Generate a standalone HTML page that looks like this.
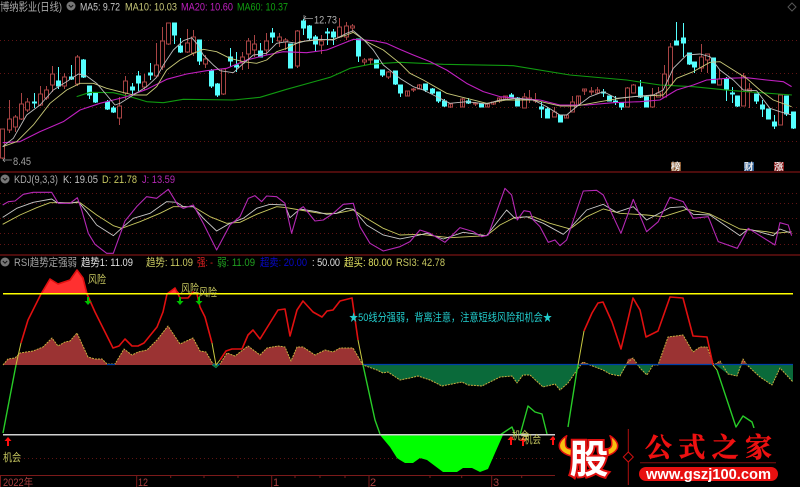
<!DOCTYPE html>
<html><head><meta charset="utf-8"><style>
html,body{margin:0;padding:0;background:#000;width:800px;height:487px;overflow:hidden}
svg{display:block;filter:blur(.35px)}
text{font-family:"Liberation Sans","Noto Sans CJK SC",sans-serif;font-size:11px}
</style></head><body>
<svg width="800" height="487" viewBox="0 0 800 487" xmlns="http://www.w3.org/2000/svg">
<rect width="800" height="487" fill="#000"/>
<!-- grids -->
<g stroke="#601414" stroke-width="1" stroke-dasharray="1 3" fill="none">
<path d="M0 40.500H800M0 73.500H800M0 107.500H800M0 141.500H800"/>
<path d="M0 193.500H800M0 203.500H800M0 218.500H800M0 233.500H800M0 244.500H800"/>
<path d="M20 458.500H555"/>
</g>
<!-- panel lines -->
<path d="M0 172H800M0 255H800" stroke="#7a1414" stroke-width="1.200" fill="none"/>
<path d="M0 475.500H555M.5 475V487M136.700 475V487M271.700 475V487M369 475V487M491.700 475V487M170.700 475V478M204 475V478M238 475V478M295 475V478M320 475V478M345 475V478M430 475V478M461.700 475V478M521.700 475V478" stroke="#7a1a1a" stroke-width="1" fill="none"/>
<!-- red candles -->
<path fill="#000" stroke="#a84444" stroke-width="1" d="M2.500 158V159M.5 129h4v29h-4zM9.500 100V119M9.500 130V133M7.500 119h4v11h-4zM15.500 115V117M15.500 127V132M13.500 117h4v10h-4zM21.500 93V104M21.500 119V120M19.500 104h4v15h-4zM27.500 98V102M27.500 110V112M25.500 102h4v8h-4zM40.500 86V94M40.500 105V106M38.500 94h4v11h-4zM46.500 86V90M46.500 98V100M44.500 90h4v8h-4zM52.500 66V74M52.500 85V92M50.500 74h4v11h-4zM64.500 73V77M64.500 86V89M62.500 77h4v9h-4zM77.500 55V57M77.500 84V86M75.500 57h4v27h-4zM119.500 97V106M119.500 118V125M117.500 106h4v12h-4zM125.500 76V81M125.500 93V99M123.500 81h4v12h-4zM144.500 74V82M144.500 87V90M142.500 82h4v5h-4zM156.500 43V65M156.500 76V77M154.500 65h4v11h-4zM162.500 27V41M162.500 67V70M160.500 41h4v26h-4zM168.500 44V45M166.500 23h4v21h-4zM187.500 29V43M187.500 52V53M185.500 43h4v9h-4zM193.500 30V37M193.500 53V56M191.500 37h4v16h-4zM205.500 55V59M205.500 64V68M203.500 59h4v5h-4zM223.500 94V95M221.500 69h4v25h-4zM242.500 52V57M242.500 63V70M240.500 57h4v6h-4zM248.500 38V41M248.500 54V69M246.500 41h4v13h-4zM254.500 35V44M254.500 50V57M252.500 44h4v6h-4zM266.500 33V41M266.500 50V55M264.500 41h4v9h-4zM279.500 33V37M279.500 41V47M277.500 37h4v4h-4zM285.500 38V40M285.500 42V50M283.500 40h4v2h-4zM297.500 30V31M297.500 66V68M295.500 31h4v35h-4zM321.500 35V41M321.500 45V54M319.500 41h4v4h-4zM339.500 18V27M339.500 37V38M337.500 27h4v10h-4zM346.500 22V26M346.500 37V40M344.500 26h4v11h-4zM352.500 24V26M352.500 28V32M350.500 26h4v2h-4zM364.500 58V60M364.500 62V65M362.500 60h4v2h-4zM370.500 58V59M370.500 60V65M368.500 59h4v1h-4zM388.500 71V72M388.500 77V79M386.500 72h4v5h-4zM407.500 91V96M405.500 91h4v5h-4zM413.500 88V92M411.500 89h4v1h-4zM419.500 84V89M417.500 85h4v4h-4zM450.500 103V108M448.500 104h4v3h-4zM462.500 98V107M460.500 99h4v8h-4zM475.500 102V106M473.500 103h4v1h-4zM487.500 103V107M485.500 104h4v3h-4zM493.500 102V105M491.500 102h4v2h-4zM499.500 98V103M497.500 98h4v3h-4zM505.500 96V100M503.500 96h4v3h-4zM524.500 93V97M522.500 97h4v11h-4zM529.500 90V103M527.500 98h4v2h-4zM535.500 93V103M533.500 100h4v1h-4zM554.500 107V112M552.500 112h4v5h-4zM566.500 115V118M564.500 115h4v3h-4zM572.500 96V102M570.500 102h4v10h-4zM578.500 96V105M576.500 96h4v9h-4zM584.500 89V95M582.500 89h4v2h-4zM591.500 87V95M589.500 91h4v1h-4zM597.500 87V94M595.500 90h4v3h-4zM627.500 87V88M625.500 88h4v19h-4zM633.500 84V85M631.500 85h4v8h-4zM652.500 88V95M652.500 107V108M650.500 95h4v12h-4zM658.500 87V93M656.500 93h4v4h-4zM664.500 65V74M662.500 74h4v23h-4zM670.500 43V47M668.500 47h4v38h-4zM701.500 44V57M701.500 68V72M699.500 57h4v11h-4zM707.500 60V73M705.500 54h4v6h-4zM719.500 70V79M717.500 79h4v6h-4zM743.500 73V76M741.500 76h4v30h-4zM749.500 83V89M749.500 91V108M747.500 89h4v2h-4zM780.500 94V95M778.500 95h4v30h-4z"/>
<!-- cyan candles -->
<path fill="#55ffff" stroke="#55ffff" stroke-width="1" d="M34.500 93V108M32.500 102h4v1h-4zM58.500 67V89M56.500 81h4v5h-4zM71.500 65V80M69.500 77h4v2h-4zM83.500 59V78M81.500 60h4v17h-4zM89.500 86V99M87.500 86h4v9h-4zM95.500 92V103M93.500 93h4v9h-4zM107.500 100V110M105.500 102h4v7h-4zM113.500 106V113M111.500 108h4v4h-4zM132.500 83V95M130.500 87h4v3h-4zM138.500 71V91M136.500 76h4v7h-4zM150.500 63V80M148.500 73h4v2h-4zM174.500 23V44M172.500 23h4v12h-4zM180.500 38V53M178.500 46h4v6h-4zM199.500 40V65M197.500 40h4v21h-4zM211.500 69V88M209.500 71h4v15h-4zM217.500 83V97M215.500 84h4v11h-4zM230.500 48V67M228.500 57h4v4h-4zM236.500 52V72M234.500 65h4v2h-4zM260.500 43V57M258.500 51h4v6h-4zM272.500 28V43M270.500 33h4v4h-4zM290.500 44V68M288.500 44h4v24h-4zM303.500 19V35M301.500 21h4v7h-4zM309.500 25V41M307.500 26h4v12h-4zM315.500 35V52M313.500 37h4v7h-4zM327.500 28V45M325.500 32h4v1h-4zM333.500 29V45M331.500 32h4v5h-4zM358.500 39V62M356.500 39h4v17h-4zM376.500 60V68M374.500 60h4v8h-4zM382.500 70V77M380.500 70h4v5h-4zM395.500 71V85M393.500 71h4v13h-4zM400.500 85V97M398.500 85h4v8h-4zM425.500 84V92M423.500 84h4v6h-4zM432.500 88V94M430.500 89h4v4h-4zM438.500 92V103M436.500 92h4v9h-4zM444.500 99V107M442.500 101h4v5h-4zM468.500 98V104M466.500 101h4v2h-4zM481.500 103V107M479.500 104h4v3h-4zM511.500 93V97M509.500 95h4v2h-4zM517.500 97V106M515.500 98h4v8h-4zM541.500 102V118M539.500 107h4v2h-4zM547.500 107V118M545.500 109h4v9h-4zM560.500 115V122M558.500 115h4v7h-4zM603.500 89V97M601.500 92h4v1h-4zM609.500 96V101M607.500 96h4v5h-4zM615.500 96V105M613.500 101h4v1h-4zM621.500 103V110M619.500 103h4v4h-4zM640.500 80V98M638.500 87h4v10h-4zM646.500 95V107M644.500 97h4v10h-4zM676.500 22V45M674.500 41h4v4h-4zM683.500 23V57M681.500 38h4v5h-4zM689.500 53V65M687.500 53h4v11h-4zM694.500 62V73M692.500 62h4v5h-4zM713.500 58V83M711.500 58h4v25h-4zM726.500 77V101M724.500 79h4v10h-4zM732.500 87V103M730.500 93h4v1h-4zM737.500 96V107M735.500 96h4v10h-4zM756.500 94V104M754.500 94h4v7h-4zM762.500 100V117M760.500 105h4v4h-4zM768.500 109V119M766.500 109h4v10h-4zM774.500 115V129M772.500 122h4v4h-4zM786.500 96V116M784.500 96h4v18h-4zM793.500 112V129M791.500 112h4v16h-4z"/>
<!-- MA lines -->
<g fill="none" stroke-linejoin="round">
<g transform="scale(.3333)" stroke-width="2.700">
<polyline stroke="#109a10" stroke-width="3.300" points="230,290 270,277 340,278 390,290 440,305 490,308 550,298 700,300 780,292 860,268 950,243 990,232 1050,205 1110,193 1150,190 1200,187 1330,193 1540,197 1710,225 1880,240 1980,255 2080,260 2200,272 2376,285"/>
<polyline stroke="#c020c0" stroke-width="3.300" points="8,428 60,425 120,395 190,365 240,330 300,310 340,300 380,290 440,268 500,238 560,222 620,212 680,205 740,180 800,165 850,155 920,158 980,150 1030,130 1060,118 1120,122 1160,130 1200,148 1240,165 1290,185 1340,210 1400,250 1450,275 1500,290 1550,295 1620,300 1680,315 1760,315 1840,308 1920,305 1980,300 2030,270 2080,255 2120,240 2180,235 2240,233 2300,240 2350,245 2375,260"/>
<polyline stroke="#c8c878" points="8,440 50,425 100,375 150,310 200,270 240,250 280,250 320,265 360,275 400,285 440,285 470,260 500,210 540,180 580,160 610,148 650,155 690,175 730,185 770,190 800,180 830,155 860,145 900,125 950,120 1000,118 1040,105 1060,97 1100,125 1150,150 1200,190 1230,220 1270,240 1340,280 1400,295 1460,310 1520,300 1600,300 1680,318 1730,318 1800,305 1860,295 1900,290 1990,285 2030,235 2080,215 2130,187 2160,185 2200,210 2240,235 2280,270 2320,300 2375,320"/>
<polyline stroke="#bcbcbc" points="8,440 40,415 80,345 120,315 160,270 200,245 235,222 260,228 290,250 320,285 345,315 360,310 400,285 440,260 470,232 490,195 520,150 550,122 575,113 590,130 610,165 640,195 660,212 700,218 725,195 760,165 800,160 830,130 860,125 890,130 920,122 960,118 1000,120 1040,100 1060,92 1090,118 1120,150 1150,195 1200,235 1240,260 1270,270 1310,290 1350,310 1400,305 1460,312 1500,300 1550,295 1600,300 1640,320 1680,345 1700,345 1730,320 1770,290 1810,275 1850,295 1900,290 1960,285 1990,270 2020,205 2060,165 2100,162 2130,170 2160,210 2200,240 2230,270 2270,272 2310,325 2340,335 2375,345"/>
</g>
<g transform="translate(0,165) scale(.3333)" stroke-width="2.700">
<polyline stroke="#c8c860" points="8,178 60,150 110,128 150,113 210,113 240,113 290,150 340,182 365,190 420,170 480,145 520,125 580,125 630,155 680,175 720,172 770,148 830,125 860,128 900,135 960,145 1010,145 1060,135 1100,160 1150,190 1200,210 1260,208 1350,218 1460,212 1500,180 1545,157 1600,155 1650,175 1710,192 1760,155 1810,132 1860,145 1940,150 1990,155 2060,133 2130,147 2220,192 2300,200 2325,205 2375,200"/>
<polyline stroke="#c8c8c8" points="8,157 50,130 100,112 155,102 170,112 210,115 235,110 260,140 290,180 340,212 370,185 400,160 450,145 500,110 530,112 550,125 580,125 610,160 650,198 690,175 730,160 770,130 810,118 855,120 870,158 900,132 950,140 980,148 1010,145 1040,130 1060,133 1100,180 1150,210 1200,222 1250,212 1280,205 1330,222 1390,202 1460,212 1520,135 1545,160 1580,155 1630,175 1690,208 1710,190 1760,135 1810,118 1850,142 1900,125 1940,165 2010,128 2050,125 2080,148 2130,150 2220,212 2245,192 2320,212 2340,192 2375,205"/>
<polyline stroke="#b428b4" stroke-width="3.300" points="8,120 25,110 45,108 70,88 100,82 155,82 175,115 210,115 232,98 245,135 265,205 285,238 320,265 340,265 375,168 410,125 440,95 470,100 505,73 535,122 550,130 580,120 610,175 650,255 690,180 720,155 745,100 765,92 785,110 800,93 830,95 855,115 875,205 895,135 910,125 945,168 970,165 1000,145 1030,118 1060,115 1080,185 1110,235 1150,258 1200,245 1230,230 1260,195 1290,205 1335,232 1380,188 1420,200 1445,215 1465,210 1515,70 1535,90 1552,165 1572,137 1590,140 1600,165 1620,185 1645,232 1665,225 1680,242 1700,225 1750,78 1790,76 1810,90 1863,205 1900,103 1940,200 1975,170 2010,97 2050,110 2080,160 2125,155 2155,230 2212,250 2245,190 2285,215 2325,240 2340,173 2365,180 2375,212"/>
</g>
<!-- RSI -->
<polygon fill="#9b3333" stroke="none" points="3,365 8,359 15,358 20,353 33,351 43,347 52,338 58,346 65,342 70,341 77,333 88,357 95,359 102,359 107,364 115,364 124,349 132,355 138,352 147,350 157,340 168,326 180,344 193,338 200,351 206,352 213,364 220,364 227,353 235,356 248,346 260,355 267,348 278,346 285,347 291,361 297,347 303,347 315,355 325,350 333,352 340,348 353,348 363,365"/>
<polygon fill="#9b3333" stroke="none" points="578,365 583,362 590,365 626,365 628,359 633,358 637,365 658,365 668,337 683,335 693,352 700,347 707,347 714,365 715,365 719,361 722,365 740,365 743,359 747,365"/>
<path fill="#0a6a3a" stroke="none" d="M363 365L377 370 383 373 388 372 400 380 410 378 418 376 430 380 442 386 462 382 468 385 482 386 490 382 500 377 512 376 517 383 523 375 530 375 543 387 555 384 560 390 568 383 577 370 580 365ZM590 365L603 370 610 374 620 376 627 365ZM637 365L646 375 653 365ZM716 365L728 374 737 376 742 365ZM747 365L760 377 772 385 780 368 793 382V365Z"/>
<polyline stroke="#c8b040" stroke-width="1" stroke-dasharray="2 1" points="3,365 8,359 15,358 20,353 33,351 43,347 52,338 58,346 65,342 70,341 77,333 88,357 95,359 102,359 107,364 115,364 124,349 132,355 138,352 147,350 157,340 168,326 180,344 193,338 200,351 206,352 213,364 220,364 227,353 235,356 248,346 260,355 267,348 278,346 285,347 291,361 297,347 303,347 315,355 325,350 333,352 340,348 353,348 363,365 377,370 383,373 388,372 400,380 410,378 418,376 430,380 442,386 462,382 468,385 482,386 490,382 500,377 512,376 517,383 523,375 530,375 543,387 555,384 560,390 568,383 577,370 583,362 590,365 603,370 610,374 620,376 627,363 633,358 640,368 647,375 653,365 658,365 668,337 683,335 693,352 700,347 707,347 714,365 720,361 728,374 737,376 743,359 747,365 760,377 772,385 780,368 793,382"/>
<path stroke="#0040a8" stroke-width="1.200" d="M363 364.500H793M107 364.500H115M213 364.500H220"/>
<path stroke="#00a060" fill="#0a6a3a" stroke-width=".5" d="M212 365L216 368 219 365Z"/>
<polygon fill="#ff3030" stroke="none" points="41,294 50,279 58,284 70,280 77,270 83,278 87,294"/>
<polygon fill="#ff3030" stroke="none" points="167,294 175,288 180,294"/>
<polyline stroke="#e01010" stroke-width="1.600" points="21,343 28,320 41,294 50,279 58,284 70,280 77,270 83,278 87,294 95,312 113,348 119,346 125,339 132,346 138,346 144,343 157,327 163,312 167,294 175,288 180,298 188,298 193,292 197,294 200,307 205,317 212,343"/>
<polyline stroke="#e01010" stroke-width="1.600" points="220,360 226,351 232,349 242,349 248,335 253,330 260,339 278,310 285,309 290,336 297,310 303,301 313,312 322,317 327,311 333,310 340,301 352,298 358,340"/>
<polyline stroke="#e01010" stroke-width="1.600" points="584,331 592,313 598,303 603,302 612,322 621,349 633,298 640,310 646,337 658,331 670,297 683,298 693,336 707,337 713,365"/>
<polyline stroke="#c8c840" stroke-width="1" points="21,343 16,365"/>
<polyline stroke="#c8c840" stroke-width="1" points="212,343 216,365 220,360"/>
<polyline stroke="#c8c840" stroke-width="1" points="358,340 363,365"/>
<polyline stroke="#c8c840" stroke-width="1" points="578,365 584,331"/>
<polyline stroke="#c8c840" stroke-width="1" points="713,365 717,370"/>
<g stroke="#28cc28" stroke-width="1.400">
<polyline points="3,433 16,365"/>
<polyline points="363,365 375,420 380,434"/>
<polyline points="568,427 577,370 578,365"/>
<polyline points="717,370 736,427 743,416 752,422 754,428"/>
<polyline points="500,435 512,427 515,435"/>
<polyline points="520,435 528,406 535,412 542,414 547,434"/>
</g>
<polygon fill="#00ff00" stroke="none" points="380,435 390,447 397,458 400,460 405,463 413,463 420,458 427,460 443,472 457,472 463,468 472,468 480,472 488,469 495,453 503,435"/>
<path stroke="#ffff00" stroke-width="1.500" d="M3 293.700H793"/>
<path stroke="#d0d0d0" stroke-width="1.500" d="M3 434.700H555"/>
</g>
<!-- arrows -->
<g fill="#00c000">
<path d="M87 297h2v4h2.500L88 305 84.500 301H87z"/>
<path d="M179 297h2v4h2.500L180 305 176.500 301H179z"/>
<path d="M198 297h2v4h2.500L199 305 195.500 301H198z"/>
</g>
<g fill="#ff1010">
<path d="M7 446h2v-5h2.500L8 437 4.500 441H7z"/>
<path d="M510 445h2v-5h2.500L511 436 507.500 440H510z"/>
<path d="M522 446h2v-5h2.500L523 437 519.500 441H522z"/>
<path d="M552 445h2v-5h2.500L553 436 549.500 440H552z"/>
</g>
<!-- text -->
<g fill="#c8c860">
<text x="88" y="283" textLength="18" lengthAdjust="spacingAndGlyphs">风险</text>
<text x="181" y="292" textLength="18" lengthAdjust="spacingAndGlyphs">风险</text>
<text x="199" y="296" textLength="18" lengthAdjust="spacingAndGlyphs">风险</text>
<text x="3" y="461" textLength="18" lengthAdjust="spacingAndGlyphs">机会</text>
<text x="512" y="439" textLength="17" lengthAdjust="spacingAndGlyphs">机会</text>
<text x="524" y="443" textLength="17" lengthAdjust="spacingAndGlyphs">机会</text>
</g>
<text x="0" y="10.500" fill="#a8a8a8" textLength="62" lengthAdjust="spacingAndGlyphs">博纳影业(日线)</text>
<text x="80" y="10.500" fill="#c8c8c8" textLength="40" lengthAdjust="spacingAndGlyphs">MA5: 9.72</text>
<text x="125" y="10.500" fill="#c8c878" textLength="52" lengthAdjust="spacingAndGlyphs">MA10: 10.03</text>
<text x="181" y="10.500" fill="#c020c0" textLength="52" lengthAdjust="spacingAndGlyphs">MA20: 10.60</text>
<text x="237" y="10.500" fill="#10a010" textLength="51" lengthAdjust="spacingAndGlyphs">MA60: 10.37</text>
<text x="314" y="23.500" fill="#b0b0b0" textLength="23" lengthAdjust="spacingAndGlyphs">12.73</text>
<text x="13" y="165" fill="#a0a0a0" textLength="18" lengthAdjust="spacingAndGlyphs">8.45</text>
<path d="M313 18.500H304M306 16l-2 2.500 2 2.500M304 15V19" stroke="#a0a0a0" fill="none" stroke-width=".8"/>
<path d="M12 160H3M5 158l-2 2 2 2" stroke="#a0a0a0" fill="none" stroke-width=".8"/>
<text x="14" y="183" fill="#a8a8a8" textLength="44" lengthAdjust="spacingAndGlyphs">KDJ(9,3,3)</text>
<text x="63" y="183" fill="#c0c0c0" textLength="35" lengthAdjust="spacingAndGlyphs">K: 19.05</text>
<text x="102" y="183" fill="#c8c860" textLength="35" lengthAdjust="spacingAndGlyphs">D: 21.78</text>
<text x="142" y="183" fill="#b428b4" textLength="33" lengthAdjust="spacingAndGlyphs">J: 13.59</text>
<text x="14" y="266" fill="#a0a0a0" textLength="63" lengthAdjust="spacingAndGlyphs">RSI趋势定强弱</text>
<text x="81" y="266" fill="#e0e0e0" textLength="52" lengthAdjust="spacingAndGlyphs">趋势1: 11.09</text>
<text x="146" y="266" fill="#c8c860" textLength="47" lengthAdjust="spacingAndGlyphs">趋势: 11.09</text>
<text x="197" y="266" fill="#dd2020" textLength="16" lengthAdjust="spacingAndGlyphs">强: -</text>
<text x="217" y="266" fill="#20a020" textLength="38" lengthAdjust="spacingAndGlyphs">弱: 11.09</text>
<text x="260" y="266" fill="#0808c8" textLength="47" lengthAdjust="spacingAndGlyphs">超卖: 20.00</text>
<text x="312" y="266" fill="#e0e0e0" textLength="28" lengthAdjust="spacingAndGlyphs">: 50.00</text>
<text x="344" y="266" fill="#e0e060" textLength="48" lengthAdjust="spacingAndGlyphs">超买: 80.00</text>
<text x="396" y="266" fill="#c8c860" textLength="49" lengthAdjust="spacingAndGlyphs">RSI3: 42.78</text>
<text x="349" y="321" fill="#22cccc" textLength="203" lengthAdjust="spacingAndGlyphs">★50线分强弱，背离注意，注意短线风险和机会★</text>
<g fill="#a84040">
<text x="3" y="486" textLength="30" lengthAdjust="spacingAndGlyphs">2022年</text>
<text x="138" y="486" textLength="10" lengthAdjust="spacingAndGlyphs">12</text>
<text x="273" y="486">1</text>
<text x="370" y="486">2</text>
<text x="493" y="486">3</text>
</g>
<!-- circle icons -->
<g>
<circle cx="71" cy="6" r="4.500" fill="#777"/><path d="M68.800 5l2.200 2.200L73.200 5" stroke="#111" fill="none"/>
<circle cx="5" cy="179" r="4.500" fill="#777"/><path d="M2.800 178l2.200 2.200L7.200 178" stroke="#111" fill="none"/>
<circle cx="5" cy="262" r="4.500" fill="#777"/><path d="M2.800 261l2.200 2.200L7.200 261" stroke="#111" fill="none"/>
</g>
<path d="M792 3l4 4-4 4-4-4z" stroke="#555" fill="none"/>
<!-- tags -->
<rect x="671" y="162" width="10" height="9" fill="#8a5a30"/>
<rect x="744" y="162" width="10" height="9" fill="#2a5a90"/>
<rect x="774" y="162" width="10" height="9" fill="#8a1a1a"/>
<g fill="#e8e8e8" font-weight="bold">
<text x="671" y="170" style="font-size:9.500px">榜</text>
<text x="744" y="170" style="font-size:9.500px">财</text>
<text x="774" y="170" style="font-size:9.500px">涨</text>
</g>
<!-- logo -->
<rect x="555" y="428" width="245" height="59" fill="#000"/>
<g stroke="#e01010" stroke-width="1.500" fill="#f8c010" stroke-linejoin="round">
<path d="M566.700 435.700Q557 442 560 449 563 454 571 456L572 449Q566 449 565.700 445 565 440 566.700 435.700Z"/>
<path d="M610 435.700Q620 442 617 449 614 454 606 456L605 449Q611 449 611.700 445 612 440 610 435.700Z"/>
</g>
<text x="589" y="473" text-anchor="middle" fill="#fff" stroke="#e01010" stroke-width="4" paint-order="stroke" font-weight="bold" style="font-size:39px;font-family:'Noto Sans CJK SC',sans-serif">股</text>
<path d="M628.300 429V485" stroke="#b01010" stroke-width="1"/>
<path d="M628.300 452l5 5-5 5-5-5z" stroke="#d01010" fill="#000" stroke-width="1"/>
<text x="645" y="457" fill="#ee1111" stroke="#ee1111" stroke-width=".5" font-weight="bold" textLength="127" style="font-size:27px;font-family:'Noto Serif CJK SC',serif">公式之家</text>
<path d="M640 462.700H776" stroke="#801010" stroke-width="1"/>
<rect x="639" y="467" width="139" height="14" rx="7" fill="#e81010"/>
<text x="646" y="479" fill="#fff" font-weight="bold" textLength="125" lengthAdjust="spacingAndGlyphs" style="font-size:15px">www.gszj100.com</text>
</svg>
</body></html>
